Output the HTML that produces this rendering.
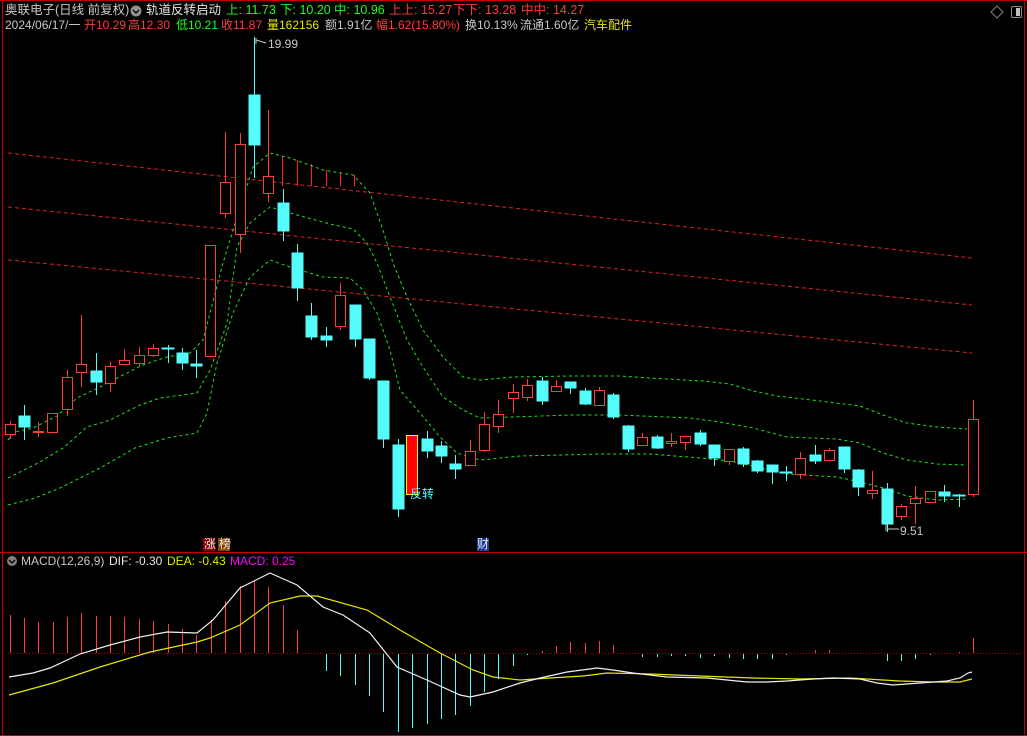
<!DOCTYPE html>
<html><head><meta charset="utf-8">
<style>
html,body{margin:0;padding:0;background:#000;width:1027px;height:736px;overflow:hidden}
body{position:relative;font-family:"Liberation Sans","Noto Sans CJK SC",sans-serif;font-size:12px}
.t{position:absolute;white-space:nowrap;line-height:14px}
.g{color:#c8c8c8}.gr{color:#1cff1c}.r{color:#ff3c3c}.y{color:#e6e600}.w{color:#e8e8e8}
.h{font-size:12.5px;top:3px}
</style></head><body>
<svg width="1027" height="736" style="position:absolute;left:0;top:0" xmlns="http://www.w3.org/2000/svg">
<g stroke="#c00000" stroke-width="1" fill="none">
<line x1="2.5" y1="0" x2="2.5" y2="736"/>
<line x1="1024.5" y1="0" x2="1024.5" y2="736"/>
<line x1="0" y1="0.5" x2="1027" y2="0.5"/>
<line x1="0" y1="552.5" x2="1027" y2="552.5"/>
<line x1="0" y1="735.5" x2="1027" y2="735.5"/>
</g>
<g stroke="#e02020" stroke-dasharray="4,3" fill="none">
<line x1="8" y1="153" x2="972" y2="258"/>
<line x1="8" y1="207" x2="972" y2="305"/>
<line x1="8" y1="260" x2="972" y2="353"/>
</g>
<g stroke="#ff2020">
<line x1="282.5" y1="156" x2="282.5" y2="186"/>
<line x1="297.5" y1="160" x2="297.5" y2="186"/>
<line x1="311.5" y1="164" x2="311.5" y2="186"/>
<line x1="326.5" y1="170" x2="326.5" y2="186"/>
<line x1="340.5" y1="172" x2="340.5" y2="186"/>
<line x1="354.5" y1="175" x2="354.5" y2="186"/>
</g>
<g stroke="#1ee01e" stroke-dasharray="3,3" fill="none">
<polyline points="8,440 15,432 33,428 57,416 77,398 100,387 123,375 143,365 167,357 190,353 203,340 223,263 233,230 253,167 270,153 290,158 323,170 353,175 370,193 383,230 393,263 407,297 423,330 443,357 463,377 480,380 513,377 570,376 620,376 650,378 703,381 730,384 753,391 777,396 820,401 860,406 883,415 907,423 937,427 967,429"/>
<polyline points="8,478 40,462 63,448 87,427 110,420 140,405 160,398 197,393 210,370 220,343 227,323 237,247 250,223 270,207 290,213 330,224 353,229 367,243 377,263 390,297 407,340 423,367 443,397 463,410 480,418 513,417 570,415 620,415 690,418 720,422 753,428 787,437 837,439 860,443 883,453 907,460 937,464 967,465"/>
<polyline points="8,505 35,498 60,488 100,468 135,448 167,438 197,433 207,413 217,363 233,313 250,277 270,260 290,267 323,277 350,278 363,290 377,313 390,350 400,390 420,413 440,437 457,453 480,460 520,456 600,454 650,454 700,458 730,461 787,474 837,477 860,482 883,488 907,496 937,500 967,499"/>
</g>
<g stroke="#ff3c3c" fill="none">
<line x1="10.5" y1="421" x2="10.5" y2="439"/><rect x="5.5" y="424.5" width="10" height="10" fill="#000"/>
<line x1="38.5" y1="422" x2="38.5" y2="437"/><rect x="33.5" y="431.5" width="10" height="1" fill="#ff3c3c"/>
<rect x="47.5" y="413.5" width="10" height="19"/>
<line x1="67.5" y1="370" x2="67.5" y2="416"/><rect x="62.5" y="377.5" width="10" height="32" fill="#000"/>
<line x1="81.5" y1="315" x2="81.5" y2="387"/><rect x="76.5" y="364.5" width="10" height="8" fill="#000"/>
<line x1="110.5" y1="362" x2="110.5" y2="392"/><rect x="105.5" y="366.5" width="10" height="17" fill="#000"/>
<line x1="124.5" y1="349" x2="124.5" y2="364"/><rect x="119.5" y="360.5" width="10" height="4" fill="#000"/>
<line x1="139.5" y1="347" x2="139.5" y2="367"/><rect x="134.5" y="355.5" width="10" height="8" fill="#000"/>
<line x1="153.5" y1="344" x2="153.5" y2="357"/><rect x="148.5" y="348.5" width="10" height="7" fill="#000"/>
<rect x="205.5" y="245.5" width="10" height="111"/>
<line x1="225.5" y1="132" x2="225.5" y2="218"/><rect x="220.5" y="182.5" width="10" height="31" fill="#000"/>
<line x1="240.5" y1="133" x2="240.5" y2="253"/><rect x="235.5" y="144.5" width="10" height="90" fill="#000"/>
<line x1="268.5" y1="110" x2="268.5" y2="202"/><rect x="263.5" y="176.5" width="10" height="17" fill="#000"/>
<line x1="340.5" y1="283" x2="340.5" y2="330"/><rect x="335.5" y="295.5" width="10" height="31" fill="#000"/>
<line x1="470.5" y1="440" x2="470.5" y2="466"/><rect x="465.5" y="451.5" width="10" height="14" fill="#000"/>
<line x1="484.5" y1="412" x2="484.5" y2="452"/><rect x="479.5" y="424.5" width="10" height="26" fill="#000"/>
<line x1="498.5" y1="400" x2="498.5" y2="433"/><rect x="493.5" y="414.5" width="10" height="12" fill="#000"/>
<line x1="513.5" y1="384" x2="513.5" y2="413"/><rect x="508.5" y="392.5" width="10" height="6" fill="#000"/>
<line x1="527.5" y1="379" x2="527.5" y2="401"/><rect x="522.5" y="385.5" width="10" height="12" fill="#000"/>
<line x1="556.5" y1="380" x2="556.5" y2="391"/><rect x="551.5" y="386.5" width="10" height="5" fill="#000"/>
<line x1="599.5" y1="387" x2="599.5" y2="405"/><rect x="594.5" y="390.5" width="10" height="15" fill="#000"/>
<line x1="642.5" y1="433" x2="642.5" y2="446"/><rect x="637.5" y="437.5" width="10" height="8" fill="#000"/>
<line x1="671.5" y1="433" x2="671.5" y2="447"/><rect x="666.5" y="441.5" width="10" height="2" fill="#000"/>
<line x1="685.5" y1="436" x2="685.5" y2="450"/><rect x="680.5" y="436.5" width="10" height="6" fill="#000"/>
<line x1="729.5" y1="449" x2="729.5" y2="465"/><rect x="724.5" y="449.5" width="10" height="12" fill="#000"/>
<line x1="800.5" y1="452" x2="800.5" y2="479"/><rect x="795.5" y="458.5" width="10" height="16" fill="#000"/>
<line x1="829.5" y1="448" x2="829.5" y2="460"/><rect x="824.5" y="450.5" width="10" height="10" fill="#000"/>
<line x1="872.5" y1="471" x2="872.5" y2="499"/><rect x="867.5" y="490.5" width="10" height="3" fill="#000"/>
<line x1="901.5" y1="504" x2="901.5" y2="520"/><rect x="896.5" y="506.5" width="10" height="10" fill="#000"/>
<line x1="915.5" y1="486" x2="915.5" y2="524"/><rect x="910.5" y="498.5" width="10" height="5" fill="#000"/>
<rect x="925.5" y="491.5" width="10" height="11"/>
<line x1="973.5" y1="400" x2="973.5" y2="497"/><rect x="968.5" y="419.5" width="10" height="75" fill="#000"/>
</g>
<g stroke="#54fcfc" fill="#54fcfc">
<line x1="24.5" y1="405" x2="24.5" y2="440"/><rect x="19" y="416" width="11" height="11"/>
<line x1="96.5" y1="353" x2="96.5" y2="395"/><rect x="91" y="371" width="11" height="11"/>
<line x1="168.5" y1="345" x2="168.5" y2="363"/><rect x="162" y="348" width="12" height="1"/>
<line x1="182.5" y1="348" x2="182.5" y2="370"/><rect x="177" y="353" width="11" height="10"/>
<line x1="196.5" y1="350" x2="196.5" y2="378"/><rect x="191" y="364" width="11" height="2"/>
<line x1="254.5" y1="37" x2="254.5" y2="178"/><rect x="249" y="95" width="11" height="50"/>
<line x1="283.5" y1="189" x2="283.5" y2="241"/><rect x="278" y="203" width="11" height="28"/>
<line x1="297.5" y1="244" x2="297.5" y2="301"/><rect x="292" y="253" width="11" height="35"/>
<line x1="311.5" y1="303" x2="311.5" y2="340"/><rect x="306" y="316" width="11" height="21"/>
<line x1="326.5" y1="327" x2="326.5" y2="347"/><rect x="321" y="336" width="11" height="4"/>
<line x1="355.5" y1="305" x2="355.5" y2="347"/><rect x="350" y="305" width="11" height="34"/>
<line x1="369.5" y1="339" x2="369.5" y2="380"/><rect x="364" y="339" width="11" height="39"/>
<line x1="383.5" y1="381" x2="383.5" y2="448"/><rect x="378" y="381" width="11" height="58"/>
<line x1="398.5" y1="439" x2="398.5" y2="517"/><rect x="393" y="445" width="11" height="64"/>
<line x1="427.5" y1="431" x2="427.5" y2="458"/><rect x="422" y="439" width="11" height="12"/>
<line x1="441.5" y1="441" x2="441.5" y2="463"/><rect x="436" y="446" width="11" height="10"/>
<line x1="455.5" y1="455" x2="455.5" y2="479"/><rect x="450" y="464" width="11" height="5"/>
<line x1="542.5" y1="377" x2="542.5" y2="405"/><rect x="537" y="381" width="11" height="20"/>
<line x1="570.5" y1="382" x2="570.5" y2="394"/><rect x="565" y="382" width="11" height="6"/>
<line x1="585.5" y1="388" x2="585.5" y2="405"/><rect x="580" y="391" width="11" height="13"/>
<line x1="613.5" y1="393" x2="613.5" y2="419"/><rect x="608" y="395" width="11" height="22"/>
<line x1="628.5" y1="425" x2="628.5" y2="452"/><rect x="623" y="426" width="11" height="23"/>
<line x1="657.5" y1="435" x2="657.5" y2="449"/><rect x="652" y="437" width="11" height="11"/>
<line x1="700.5" y1="430" x2="700.5" y2="446"/><rect x="695" y="433" width="11" height="11"/>
<line x1="714.5" y1="445" x2="714.5" y2="466"/><rect x="709" y="445" width="11" height="13"/>
<line x1="743.5" y1="447" x2="743.5" y2="467"/><rect x="738" y="449" width="11" height="15"/>
<line x1="757.5" y1="460" x2="757.5" y2="473"/><rect x="752" y="461" width="11" height="10"/>
<line x1="772.5" y1="465" x2="772.5" y2="484"/><rect x="767" y="465" width="11" height="7"/>
<line x1="786.5" y1="466" x2="786.5" y2="481"/><rect x="780" y="472" width="12" height="1"/>
<line x1="815.5" y1="445" x2="815.5" y2="464"/><rect x="810" y="455" width="11" height="6"/>
<line x1="844.5" y1="447" x2="844.5" y2="473"/><rect x="839" y="447" width="11" height="22"/>
<line x1="858.5" y1="469" x2="858.5" y2="496"/><rect x="853" y="470" width="11" height="17"/>
<line x1="887.5" y1="483" x2="887.5" y2="532"/><rect x="882" y="489" width="11" height="35"/>
<line x1="944.5" y1="485" x2="944.5" y2="502"/><rect x="939" y="492" width="11" height="4"/>
<line x1="959.5" y1="494" x2="959.5" y2="507"/><rect x="953" y="495" width="12" height="1"/>
</g>
<rect x="406.5" y="435.5" width="11" height="59" fill="#ff0000" stroke="#ffff00"/>
<line x1="8" y1="653.5" x2="1022" y2="653.5" stroke="#c00000" stroke-dasharray="1,2"/>
<g stroke="#ff3c3c">
<line x1="10.5" y1="615" x2="10.5" y2="653"/><line x1="24.5" y1="618" x2="24.5" y2="653"/><line x1="38.5" y1="622" x2="38.5" y2="653"/><line x1="53.5" y1="622" x2="53.5" y2="653"/><line x1="67.5" y1="617" x2="67.5" y2="653"/><line x1="81.5" y1="613" x2="81.5" y2="653"/><line x1="96.5" y1="616" x2="96.5" y2="653"/><line x1="110.5" y1="616" x2="110.5" y2="653"/><line x1="124.5" y1="617" x2="124.5" y2="653"/><line x1="139.5" y1="619" x2="139.5" y2="653"/><line x1="153.5" y1="621" x2="153.5" y2="653"/><line x1="168.5" y1="624" x2="168.5" y2="653"/><line x1="182.5" y1="629" x2="182.5" y2="653"/><line x1="196.5" y1="635" x2="196.5" y2="653"/><line x1="211.5" y1="620" x2="211.5" y2="653"/><line x1="225.5" y1="601" x2="225.5" y2="653"/><line x1="240.5" y1="586" x2="240.5" y2="653"/><line x1="254.5" y1="581" x2="254.5" y2="653"/><line x1="268.5" y1="587" x2="268.5" y2="653"/><line x1="283.5" y1="605" x2="283.5" y2="653"/><line x1="297.5" y1="630" x2="297.5" y2="653"/>
<line x1="542.5" y1="651" x2="542.5" y2="653"/><line x1="556.5" y1="646" x2="556.5" y2="653"/><line x1="570.5" y1="642" x2="570.5" y2="653"/><line x1="585.5" y1="643" x2="585.5" y2="653"/><line x1="599.5" y1="641" x2="599.5" y2="653"/><line x1="613.5" y1="645" x2="613.5" y2="653"/><line x1="815.5" y1="650" x2="815.5" y2="653"/><line x1="829.5" y1="650" x2="829.5" y2="653"/><line x1="959.5" y1="652" x2="959.5" y2="653"/><line x1="973.5" y1="638" x2="973.5" y2="653"/>
</g>
<g stroke="#54fcfc">
<line x1="326.5" y1="654" x2="326.5" y2="671"/><line x1="340.5" y1="654" x2="340.5" y2="676"/><line x1="355.5" y1="654" x2="355.5" y2="685"/><line x1="369.5" y1="654" x2="369.5" y2="696"/><line x1="383.5" y1="654" x2="383.5" y2="712"/><line x1="398.5" y1="654" x2="398.5" y2="732"/><line x1="412.5" y1="654" x2="412.5" y2="728"/><line x1="427.5" y1="654" x2="427.5" y2="724"/><line x1="441.5" y1="654" x2="441.5" y2="719"/><line x1="455.5" y1="654" x2="455.5" y2="715"/><line x1="470.5" y1="654" x2="470.5" y2="706"/><line x1="484.5" y1="654" x2="484.5" y2="692"/><line x1="498.5" y1="654" x2="498.5" y2="679"/><line x1="513.5" y1="654" x2="513.5" y2="666"/><line x1="527.5" y1="654" x2="527.5" y2="655"/>
<line x1="642.5" y1="654" x2="642.5" y2="657"/><line x1="657.5" y1="654" x2="657.5" y2="657"/><line x1="671.5" y1="654" x2="671.5" y2="656"/><line x1="685.5" y1="654" x2="685.5" y2="656"/><line x1="700.5" y1="654" x2="700.5" y2="658"/><line x1="714.5" y1="654" x2="714.5" y2="656"/><line x1="729.5" y1="654" x2="729.5" y2="658"/><line x1="743.5" y1="654" x2="743.5" y2="659"/><line x1="757.5" y1="654" x2="757.5" y2="659"/><line x1="772.5" y1="654" x2="772.5" y2="659"/><line x1="786.5" y1="654" x2="786.5" y2="655"/><line x1="887.5" y1="654" x2="887.5" y2="661"/><line x1="901.5" y1="654" x2="901.5" y2="661"/><line x1="915.5" y1="654" x2="915.5" y2="659"/><line x1="930.5" y1="654" x2="930.5" y2="655"/>
</g>
<polyline fill="none" stroke="#e6e600" stroke-width="1.2" points="9,695 53,683 100,667 150,652 197,642 210,638 240,625 270,603 300,596 317,596 367,610 400,630 440,653 473,670 493,677 520,680 550,678 583,676 607,673 650,674 700,676 753,678 800,679 850,678 883,680 900,681 933,682 960,682 968,680 972,679"/>
<polyline fill="none" stroke="#f0f0f0" stroke-width="1.2" points="9,677 33,673 50,668 80,654 110,645 140,637 167,632 197,633 213,620 240,588 270,573 297,585 323,607 343,615 370,633 397,667 427,680 460,695 470,697 493,692 520,683 540,678 567,672 597,668 613,670 633,673 667,677 707,678 747,682 767,682 787,681 813,679 833,678 860,679 877,683 893,685 920,683 947,681 960,678 968,673 972,672"/>
<path d="M997 6 L1003 12 L997 18 L991 12 Z" fill="none" stroke="#808080"/>
<rect x="1011.5" y="6.5" width="10" height="11" rx="1.5" fill="none" stroke="#909090"/>
<rect x="1016" y="8" width="4" height="8" fill="#c0c0c0"/>
<path d="M256 38 V44 M256 40 L266 43" stroke="#c8c8c8" fill="none"/>
<path d="M886 523 V531 M888 529 L899 529" stroke="#c8c8c8" fill="none"/>
<circle cx="12" cy="561" r="5" fill="#808080"/><path d="M9 560 L12 563 L15 560" stroke="#000" fill="none" stroke-width="1.3"/>
<circle cx="136" cy="11" r="5.5" fill="#909090"/><path d="M133 10 L136 13 L139 10" stroke="#000" fill="none" stroke-width="1.3"/>
<rect x="203" y="538" width="12" height="13" fill="#8b0000"/>
<rect x="218" y="538" width="12" height="13" fill="#8b4500"/>
<rect x="477" y="538" width="12" height="13" fill="#1a3aa0"/>
</svg>
<div class="t g h" style="left:5px">奥联电子(日线 前复权)</div>
<div class="t w h" style="left:146px">轨道反转启动</div>
<div class="t gr h" style="left:226px">上: 11.73</div>
<div class="t gr h" style="left:280px">下: 10.20</div>
<div class="t gr h" style="left:334px">中: 10.96</div>
<div class="t r h" style="left:389px">上上: 15.27</div>
<div class="t r h" style="left:453px">下下: 13.28</div>
<div class="t r h" style="left:521px">中中: 14.27</div>
<div class="t g" style="left:5px;top:18px">2024/06/17/一</div>
<div class="t r" style="left:84px;top:18px">开10.29</div>
<div class="t r" style="left:128px;top:18px">高12.30</div>
<div class="t gr" style="left:176px;top:18px">低10.21</div>
<div class="t r" style="left:221px;top:18px">收11.87</div>
<div class="t y" style="left:267px;top:18px">量162156</div>
<div class="t g" style="left:325px;top:18px">额1.91亿</div>
<div class="t r" style="left:376px;top:18px">幅1.62(15.80%)</div>
<div class="t g" style="left:465px;top:18px">换10.13%</div>
<div class="t g" style="left:520px;top:18px">流通1.60亿</div>
<div class="t y" style="left:584px;top:18px">汽车配件</div>
<div class="t g" style="left:268px;top:37px">19.99</div>
<div class="t g" style="left:900px;top:524px">9.51</div>
<div class="t" style="left:410px;top:487px;color:#54fcfc">反转</div>
<div class="t w" style="left:204px;top:537px">涨</div>
<div class="t w" style="left:219px;top:537px">榜</div>
<div class="t w" style="left:477px;top:537px">财</div>
<div class="t g" style="left:21px;top:554px">MACD(12,26,9)</div>
<div class="t w" style="left:109px;top:554px">DIF: -0.30</div>
<div class="t y" style="left:167px;top:554px">DEA: -0.43</div>
<div class="t" style="left:230px;top:554px;color:#ff00ff">MACD: 0.25</div>
</body></html>
